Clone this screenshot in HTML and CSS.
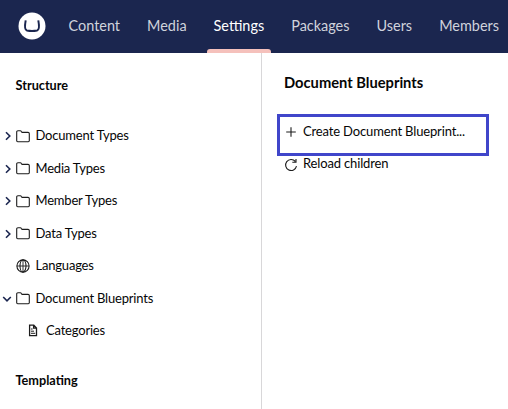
FILE: index.html
```html
<!DOCTYPE html>
<html lang="en">
<head>
<meta charset="utf-8">
<title>Settings</title>
<link rel="stylesheet" href="styles.css">
</head>
<body>
<svg class="defs" aria-hidden="true">
  <symbol id="folder" viewBox="0 0 14 13"><path d="M.7 10.8V2Q.7.8 1.9.8H4.3Q5 .8 5.4 1.5L6 2.4H12Q13.3 2.4 13.3 3.6V10.8Q13.3 11.7 12.3 11.7H1.7Q.7 11.7.7 10.8Z"/></symbol>
  <symbol id="right" viewBox="0 0 6 10"><path d="M1 1.2 4.8 5 1 8.8"/></symbol>
</svg>
<header class="header">
  <svg class="logo" viewBox="0 0 28 28"><circle cx="14" cy="14" r="13.5" fill="#fff"/><path d="M7.7 8.4Q5.9 17.7 8.9 18.5Q14 19.5 19.1 18.5Q22.1 17.7 20.3 8.4" fill="none" stroke="#1b264f" stroke-width="2"/></svg>
  <nav class="nav">
    <a class="tab">Content</a>
    <a class="tab">Media</a>
    <a class="tab active">Settings</a>
    <a class="tab">Packages</a>
    <a class="tab">Users</a>
    <a class="tab">Members</a>
  </nav>
</header>
<div class="body">
  <aside class="sidebar">
    <h2 class="group">Structure</h2>
    <ul class="tree">
      <li class="row"><svg class="caret"><use href="#right"/></svg><svg class="icon"><use href="#folder"/></svg><span>Document Types</span></li>
      <li class="row"><svg class="caret"><use href="#right"/></svg><svg class="icon"><use href="#folder"/></svg><span>Media Types</span></li>
      <li class="row"><svg class="caret"><use href="#right"/></svg><svg class="icon"><use href="#folder"/></svg><span>Member Types</span></li>
      <li class="row"><svg class="caret"><use href="#right"/></svg><svg class="icon"><use href="#folder"/></svg><span>Data Types</span></li>
      <li class="row leaf"><svg class="icon globe" viewBox="0 0 14 14"><circle cx="7" cy="7" r="6.1"/><ellipse cx="7" cy="7" rx="3" ry="6.1"/><path d="M.9 7H13.1M7 1V13" stroke-width=".9"/></svg><span>Languages</span></li>
      <li class="row open"><svg class="caret down" viewBox="0 0 10 6"><path d="M1.2 1 5 4.8 8.8 1"/></svg><svg class="icon"><use href="#folder"/></svg><span>Document Blueprints</span></li>
      <li class="row child"><svg class="icon doc" viewBox="0 0 10 13"><path d="M1.6 1.2H5.8L8.5 4V11.6H1.6Z M5.6 1.2V4.2H8.5"/><path d="M3 5H4.6M3 7.2H6M3 9.3H7.2" stroke-width="1"/></svg><span>Categories</span></li>
    </ul>
    <h2 class="group second">Templating</h2>
  </aside>
  <main class="panel">
    <h1 class="title">Document Blueprints</h1>
    <div class="action marked"><svg class="sign" viewBox="0 0 14 14"><path d="M7 2.2V11.8M2.2 7H11.8"/></svg><span>Create Document Blueprint...</span></div>
    <div class="action second-action"><svg class="sign reload" viewBox="0 0 14 14"><path d="M11.3 3.4A5.5 5.5 0 1 0 12.5 8.2M12 .9V4.2H8.3"/></svg><span>Reload children</span></div>
  </main>
</div>
</body>
</html>
```
FILE: styles.css
```css
* { box-sizing: border-box; }
body { margin: 0; height: 409px; overflow: hidden; background: #fff; color: #060606; font: 13px/20px Lato, sans-serif; display: flex; flex-direction: column; }
h1, h2, ul { margin: 0; padding: 0; }
svg { flex: none; fill: none; stroke: #1c1c1c; stroke-width: 1.1; }
.defs { display: none; }
.header { height: 53px; flex: none; background: #1b264f; display: flex; align-items: center; padding-left: 18px; }
.logo { width: 28px; height: 28px; stroke: none; margin-top: -2px; }
.nav { display: flex; align-self: stretch; gap: 14px; margin-left: 16px; }
.tab { position: relative; padding: 0 6.5px 1px; display: flex; align-items: center; color: #d0d3dc; font-size: 14.45px; white-space: nowrap; }
.active { color: #fff; }
.active::after { content: ""; position: absolute; left: 0; right: 0; bottom: 0; height: 4px; background: #f5c1bc; border-radius: 3px 3px 0 0; }
.body { flex: 1; display: flex; }
.sidebar { width: 262px; border-right: 1px solid #d8d7d9; padding-top: 22px; }
.group { font-size: 12.7px; line-height: 20px; font-weight: 700; padding-left: 15.5px; }
.tree { list-style: none; padding-top: 24px; }
.row { height: 32.5px; display: flex; align-items: center; padding-left: 5px; }
.row span { letter-spacing: -.2px; }
.action span { letter-spacing: -.15px; }
.caret { width: 6px; height: 10px; margin: 2px 5px 0 0; stroke: #1b264f; stroke-width: 1.6; }
.icon { width: 14px; height: 13px; margin: 2px 5.5px 0 0; }
.globe { height: 14px; }
.leaf { padding-left: 16px; }
.open { padding-left: 2px; }
.down { width: 10px; height: 6px; margin-right: 4px; }
.child { padding-left: 28px; }
.doc { width: 10px; margin: 1px 8px 0 0; stroke-width: 1.3; }
.second { margin-top: 23px; }
.panel { padding: 19px 0 0 15px; }
.title { font-size: 14.7px; line-height: 20px; padding-left: 7px; font-weight: 700; }
.action { display: flex; align-items: center; padding-left: 7px; height: 17px; }
.sign { width: 14px; height: 14px; margin-right: 5px; }
.marked { width: 212px; height: 42px; margin-top: 22px; border: 3px solid #4046ca; padding: 0 0 8px 4px; }
.marked .sign { margin-top: 1px; }
.second-action { margin-top: -2px; }
.reload { margin-top: 4px; }
```
